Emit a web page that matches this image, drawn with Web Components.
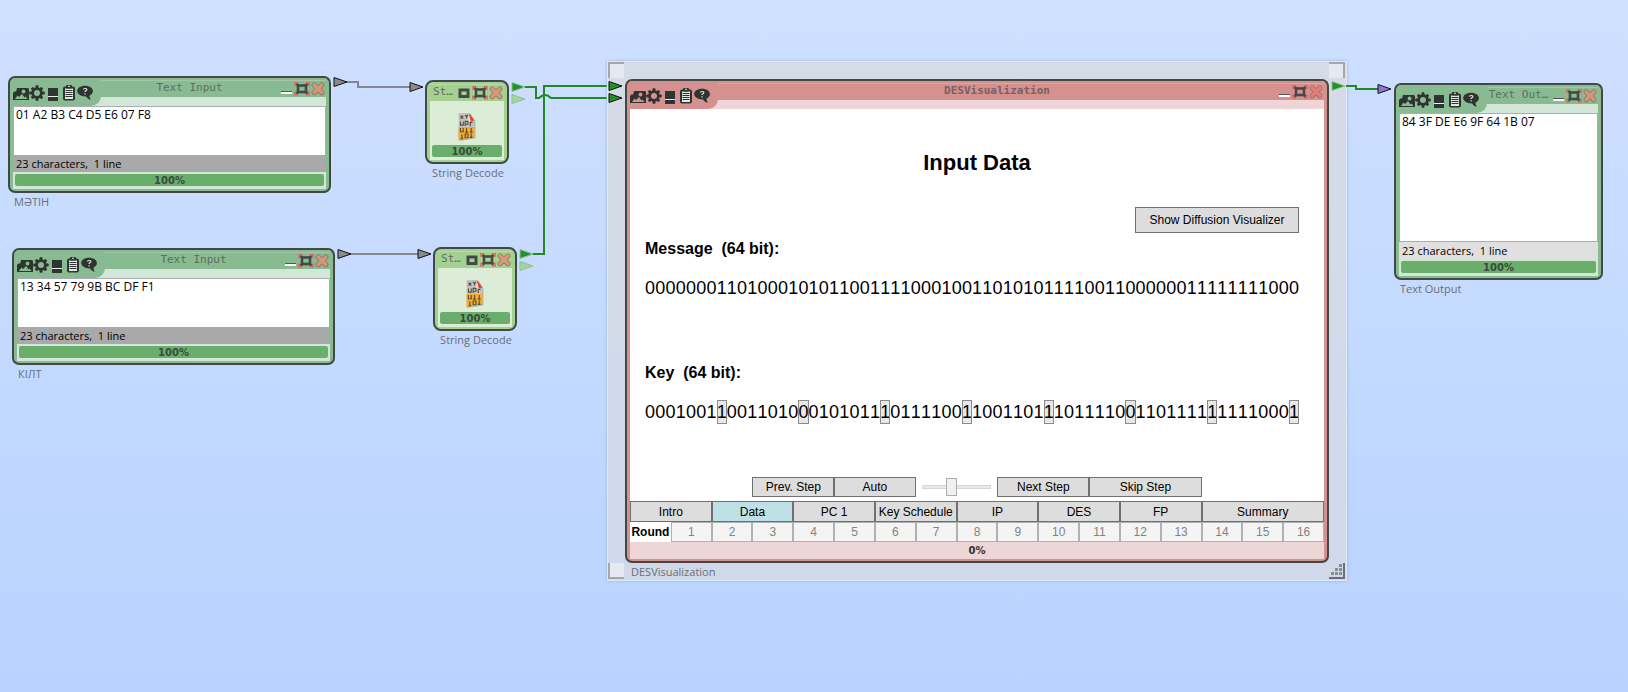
<!DOCTYPE html>
<html lang="en">
<head>
<meta charset="utf-8">
<title>Workspace</title>
<style>
  html, body { margin: 0; min-height: 100%; }
  body { font-family: "Open Sans", "Noto Sans", sans-serif; font-size: 12px; }
</style>
</head>
<body>
<flow-workspace>
  <flow-wires></flow-wires>
  <flow-node style="left:8px;top:76px;width:323px;height:117px" heading="Text Input" caption="МӘТІН" progress="100">
    <text-panel value="01 A2 B3 C4 D5 E6 07 F8" label="Message text" status="23 characters,&nbsp; 1 line"></text-panel>
  </flow-node>
  <flow-node style="left:12px;top:248px;width:323px;height:117px" heading="Text Input" caption="КІЛТ" progress="100">
    <text-panel value="13 34 57 79 9B BC DF F1" label="Key text" status="23 characters,&nbsp; 1 line"></text-panel>
  </flow-node>
  <flow-tile style="left:425px;top:80px;width:84px;height:84px" heading="St…" caption="String Decode"></flow-tile>
  <flow-tile style="left:433px;top:247px;width:84px;height:84px" heading="St…" caption="String Decode"></flow-tile>
  <selection-frame style="left:607px;top:61px;width:740px;height:520px">
    <flow-node kind="alert" heading="DESVisualization" caption="DESVisualization" progress="0">
      <des-view></des-view>
    </flow-node>
  </selection-frame>
  <flow-node style="left:1394px;top:83px;width:209px;height:197px" heading="Text Out…" caption="Text Output" progress="100">
    <text-panel light value="84 3F DE E6 9F 64 1B 07" label="Output text" status="23 characters,&nbsp; 1 line"></text-panel>
  </flow-node>
  <flow-ports></flow-ports>
</flow-workspace>

<script>
const ICONS = {
  picture: `<svg viewBox="0 0 16 16"><path fill="#2f3430" d="M4 3h11l1 1v11H0V8l2-2 1 1z"/><circle cx="10.500" cy="6.500" r="1.900" fill="var(--title)"/><path fill="var(--title)" d="M2 14l2.500-3.500L6 12l3-3 2.500 3.500 1-1L14.500 14z"/></svg>`,
  gear: `<svg viewBox="0 0 16 16"><g fill="#2f3430"><circle cx="8" cy="8" r="5.800"/><rect x="6.500" y="0.300" width="3" height="15.400" rx=".7"/><rect x="0.300" y="6.500" width="15.400" height="3" rx=".7"/><g transform="rotate(45 8 8)"><rect x="6.500" y="0.500" width="3" height="15" rx=".7"/><rect x="0.500" y="6.500" width="15" height="3" rx=".7"/></g></g><circle cx="8" cy="8" r="3" fill="var(--title)"/></svg>`,
  panel: `<svg viewBox="0 0 16 16"><rect x="3" y="3" width="10" height="13" fill="#2f3430"/><rect x="3" y="11" width="10" height="1" fill="#e8efe8"/></svg>`,
  clipboard: `<svg viewBox="0 0 16 16"><rect x="2" y="1.500" width="12" height="14" rx="2" fill="#2f3430"/><rect x="4" y="3.500" width="8" height="10.500" fill="#dfe9df"/><rect x="5" y="0" width="6" height="3.500" rx="1" fill="#2f3430"/><rect x="7" y="0.800" width="2" height="1" fill="#dfe9df"/><path stroke="#2f3430" d="M4.500 5.500h7M4.500 7.500h7M4.500 9.500h7M4.500 11.500h7"/></svg>`,
  help: `<svg viewBox="0 0 16 16"><path fill="#2f3430" d="M8 .8c4.600 0 7.900 2.300 7.900 5.300 0 1.900-1.400 3.700-3.400 4.600.1 1.800.6 3 1.600 3.900-2.300-.2-4-1.300-5-3.200C4.200 11.600.2 9.200.2 6.100.2 3.100 3.500.8 8 .8z"/><path d="M6.300 4.500c.1-1.200 3.600-1.500 3.500.2 0 1.200-1.800 1.100-1.800 2.400M8 8.200v1.300" fill="none" stroke="#d9e2d9" stroke-width="1.200"/></svg>`,
  minimize: `<svg viewBox="0 0 16 16"><path fill="#555" d="M3 10h11v1H3z"/><path fill="#fff" d="M3 11h11v2H3z"/></svg>`,
  restore: `<svg viewBox="0 0 16 16"><rect x="4" y="5" width="8" height="6.500" fill="none" stroke="#454a45" stroke-width="3"/></svg>`,
  full: `<svg viewBox="0 0 16 16"><path fill="none" stroke="#e8625f" stroke-width="1.600" d="M1 5V1.800h3M12 1.800h3V5M15 10.500v3.200h-3M4 13.700H1v-3.200"/><path d="M2.500 3l11 9.500M13.500 3l-11 9.500" stroke="#454a45" stroke-width="2.600"/><rect x="4" y="4.500" width="8" height="6.500" fill="var(--title)" stroke="#454a45" stroke-width="2.600"/></svg>`,
  close: `<svg viewBox="0 0 16 16"><path stroke="#8d7666" stroke-width="5.200" stroke-linecap="round" d="M4.200 4l7.600 7.600M11.800 4l-7.600 7.600"/><path stroke="var(--close)" stroke-width="3.600" stroke-linecap="round" d="M4.200 4l7.600 7.600M11.800 4l-7.600 7.600"/></svg>`,
  decode: `<svg viewBox="0 0 20 32"><path d="M2 3l12-1 5 8v18L2 31z" fill="#77777777"/><path d="M1 1l11 0 6 8v17L1 30z" fill="#c2c2c2"/><path d="M1 16h17v10L1 30z" fill="#f7ab2c"/><path d="M12 1l6 8-5 1z" fill="#e5432a"/><path d="M12 3l-1 7h3z" fill="#ece9e2"/><g fill="none" stroke="#55503f" stroke-width="1.200"><path d="M3 4l3 3M6 4l-3 3M8 3l1.500 2L11 3M9.500 5v2M3 10v4h3v-4M8 15v-5h3v3H8M13.500 15v-4h2.500M4.500 14v0M3 17v4h3v-4M9.500 17v4M8 21.500h3M14.500 17v4M13 21.500h3M4.500 24v4M3 28.500h3M8 23.500v4h3v-4zM14.500 23v4M13 27h3"/></g></svg>`
};

function define(name, build) {
  customElements.define(name, class extends HTMLElement {
    connectedCallback() {
      if (this.shadowRoot) return;
      const root = this.attachShadow({ mode: 'open' });
      const t = document.createElement('template');
      t.innerHTML = build(this);
      root.append(t.content.cloneNode(true));
    }
  });
}
const iconButton = (icon, label) => `<button class="icon" aria-label="${label}">${ICONS[icon]}</button>`;
const iconCss = `.icon{border:0;padding:0;margin:0;background:none;width:16px;height:16px;flex:none;display:block}
  .icon svg{display:block;width:16px;height:16px}`;
const titleCss = `.title{flex:1;min-width:0;text-align:center;font:11px/20px "DejaVu Sans Mono",monospace;color:#5d6e60;white-space:nowrap;overflow:hidden}`;
const fillCss = `.fill{box-sizing:border-box;height:12px;padding-top:1px;background:#69af6b;border-radius:2px;text-align:center;font:bold 10px/12px "DejaVu Sans",sans-serif;color:#3c4a3e}`;

define('flow-workspace', () => `
  <style>
    :host{display:block;position:relative;min-height:100vh;overflow:hidden;background:linear-gradient(#cfe0ff,#b8d3ff)}
    ::slotted(*){position:absolute}
  </style><slot></slot>`);

define('flow-node', el => `
  <style>
    :host{display:block;position:relative;--title:#89bb92;--pale:#d2e7d8;--close:#d59578}
    :host([kind=alert]){--title:#d59090;--pale:#eed6d6;--close:#ea7a78}
    .frame{box-sizing:border-box;height:100%;border:2px solid #424844;border-radius:7px;background:var(--title);padding:0 3px 2px;display:flex;flex-direction:column}
    header{display:grid;grid-template-columns:88px 1fr;height:28px;flex:none;background:linear-gradient(var(--title) 19px,var(--pale) 19px)}
    .tools{display:flex;padding:7px 0 0;background:var(--title);border-bottom-right-radius:10px}
    .bar{display:flex;height:19px;background:linear-gradient(#fff0 2px,#fff3 2px,#fff3 3px,#fff0 3px)}
    .controls{display:flex;padding-top:3px}
    .body{flex:1;min-height:0;display:flex;flex-direction:column}
    .body ::slotted(*){flex:1;min-height:0}
    .progress{flex:none;height:17px;box-sizing:border-box;padding:2px;background:var(--pale)}
    .caption{position:absolute;left:6px;top:100%;font-size:11px;line-height:18px;color:#6b6f75;white-space:nowrap}
    ${iconCss}${titleCss}${fillCss}
    :host([kind=alert]) .fill{background:none;color:#333}
    :host([kind=alert]) .title{font-weight:bold;color:#7a6060}
  </style>
  <section class="frame">
    <header>
      <div class="tools">${iconButton('picture','Presentation')}${iconButton('gear','Settings')}${iconButton('panel','Data')}${iconButton('clipboard','Log')}${iconButton('help','Help')}</div>
      <div class="bar"><span class="title">${el.getAttribute('heading')}</span>
      <div class="controls">${iconButton('minimize','Minimize')}${iconButton('full','Full screen')}${iconButton('close','Close')}</div></div>
    </header>
    <div class="body"><slot></slot></div>
    <div class="progress"><div class="fill">${el.getAttribute('progress')}%</div></div>
  </section>
  <div class="caption">${el.getAttribute('caption')}</div>`);

define('text-panel', el => `
  <style>
    :host{display:flex;flex-direction:column}
    textarea{flex:1;min-height:0;box-sizing:border-box;width:100%;border:1px solid #abadb3;border-bottom:0;padding:0 2px;margin:0;resize:none;font:inherit;font-size:12px;line-height:15px;background:#fff;color:#000;outline:0;display:block;overflow:hidden}
    .status{height:17px;font-size:11px;line-height:18px;padding-left:3px;background:#a9a9a9;color:#000}
    :host([light]) .status{background:#e0e0e0;border-top:1px solid #abadb3}
  </style>
  <textarea aria-label="${el.getAttribute('label')}">${el.getAttribute('value')}</textarea>
  <div class="status">${el.getAttribute('status')}</div>`);

define('flow-tile', el => `
  <style>
    :host{display:block;--title:#a4d192;--close:#d9987c}
    .frame{box-sizing:border-box;height:100%;border:2px solid #424844;border-radius:8px;background:var(--title);padding:0 3px 2px;display:flex;flex-direction:column}
    header{display:flex;height:19px;flex:none;background:linear-gradient(#fff0 2px,#fff3 2px,#fff3 3px,#fff0 3px)}
    .controls{display:flex;padding-top:3px}
    .body{flex:1;box-sizing:border-box;background:#dbedd6;padding:11px 2px 3px;display:flex;flex-direction:column;align-items:center;justify-content:space-between}
    .pic svg{display:block;width:20px;height:30px}
    .caption{position:absolute;left:-10px;right:-12px;top:100%;font-size:11px;line-height:18px;text-align:center;color:#6b6f75;white-space:nowrap}
    ${iconCss}${titleCss}${fillCss}
    .fill{width:100%}
  </style>
  <section class="frame">
    <header><span class="title">${el.getAttribute('heading')}</span><div class="controls">${iconButton('restore','Restore')}${iconButton('full','Full screen')}${iconButton('close','Close')}</div></header>
    <div class="body"><div class="pic">${ICONS.decode}</div><div class="fill">100%</div></div>
  </section>
  <div class="caption">${el.getAttribute('caption')}</div>`);

define('selection-frame', () => `
  <style>
    :host{display:block;box-sizing:border-box;padding:17px;background:linear-gradient(#d5dce7,#cfd9e9);border:1px solid #dfe8f6;box-shadow:0 0 3px #9db4d8}
    ::slotted(*){height:484px;display:block}
    i{position:absolute;width:16px;height:16px;box-sizing:border-box;background:#e5eaf2;border:0 solid #a5a7aa}
    .tl{left:0;top:0;border-width:2px 0 0 2px}.tr{right:1px;top:0;border-width:2px 2px 0 0}
    .bl{left:0;bottom:1px;border-width:0 0 2px 2px}
    .br{right:1px;bottom:1px;border-width:0 2px 2px 0;border-color:#6d7076;background:none}
    .br svg{display:block}
  </style>
  <slot></slot><i class="tl"></i><i class="tr"></i><i class="bl"></i>
  <i class="br"><svg width="14" height="14" fill="#8b8d92"><path d="M10 1h3v3h-3zM6 5h3v3H6zM10 5h3v3h-3zM2 9h3v3H2zM6 9h3v3H6zM10 9h3v3h-3z"/></svg></i>`);

define('bit-row', el => {
  const every = Number(el.getAttribute('mark-every')) || 0;
  const cells = [...el.getAttribute('bits')].map((b, i) =>
    every && (i + 1) % every === 0 ? `<b>${b}</b>` : `<span>${b}</span>`).join('');
  return `<style>
    :host{display:grid;grid-template-columns:repeat(64,1fr);height:24px;font:18px/24px "Liberation Sans",Arial,sans-serif;color:#000;text-align:center}
    b{font-weight:normal;background:#e8e8e8;outline:1px solid #8a8a8a;outline-offset:-1px}
  </style>${cells}`;
});

define('des-view', () => {
  const tabs = ['Intro','Data','PC 1','Key Schedule','IP','DES','FP','Summary'];
  return `<style>
    :host{display:flex;flex-direction:column;background:#fff;color:#000;font:12px "Liberation Sans",Arial,sans-serif}
    .main{flex:1;min-height:0;padding:42px 25px 0 15px;display:flex;flex-direction:column}
    .main>*{flex:none}
    h2{margin:0 -10px 32px 0;text-align:center;font-size:22px;line-height:24px}
    h3{margin:0;font-size:16px;line-height:20px}
    button{font:inherit;color:#000;background:#ddd;border:1px solid #707070;border-radius:0;padding:0;margin:0;min-width:0;white-space:nowrap}
    .show{align-self:flex-end;width:164px;height:26px;margin-bottom:6px}
    bit-row{margin:17px 0 63px}
    bit-row:last-child{margin-bottom:0}
    .grid{display:grid;grid-template-columns:repeat(68,1fr);flex:none}
    .steps{height:20px;margin-bottom:4px}
    .tabs{height:21px}.rounds{height:20px}
    .tabs button{grid-column:span 8}.tabs button:last-child{grid-column:span 12}
    .tabs button.on{background:#bee0e6}
    .rounds button{grid-column:span 4;background:#f4f4f4;border-color:#adb2b5;color:#838383}
    .rounds strong{grid-column:span 4;line-height:20px;text-align:center}
    input{-webkit-appearance:none;appearance:none;margin:0 6px;min-width:0;background:none;height:20px}
    input::-webkit-slider-runnable-track{height:4px;box-sizing:border-box;background:#e7eaea;border:1px solid #d6d6d6}
    input::-webkit-slider-thumb{-webkit-appearance:none;width:11px;height:18px;box-sizing:border-box;margin-top:-8px;background:#f0f0f0;border:1px solid #acacac;border-radius:0}
  </style>
  <div class="main">
    <h2>Input Data</h2>
    <button class="show">Show Diffusion Visualizer</button>
    <h3>Message&nbsp; (64 bit):</h3>
    <bit-row bits="0000000110100010101100111100010011010101111001100000011111111000"></bit-row>
    <h3>Key&nbsp; (64 bit):</h3>
    <bit-row mark-every="8" bits="0001001100110100010101110111100110011011101111001101111111110001"></bit-row>
  </div>
  <div class="grid steps">
    <button style="grid-column:13/21">Prev. Step</button><button style="grid-column:21/29">Auto</button>
    <input type="range" aria-label="Speed" min="0" max="100" value="41" style="grid-column:29/37">
    <button style="grid-column:37/46">Next Step</button><button style="grid-column:46/57">Skip Step</button>
  </div>
  <div class="grid tabs">${tabs.map(t => `<button${t === 'Data' ? ' class="on"' : ''}>${t}</button>`).join('')}</div>
  <div class="grid rounds"><strong>Round</strong>${Array.from({ length: 16 }, (_, i) => `<button disabled>${i + 1}</button>`).join('')}</div>`;
});

define('flow-wires', () => `
  <style>:host{display:block;left:0;top:0}svg{display:block}</style>
  <svg width="1628" height="400" fill="none" stroke-width="2" aria-hidden="true">
    <g stroke="#85878d"><path d="M347 82h11v5h52M351 254h67"/></g>
    <g stroke="#1f8a24"><path d="M525 87h11v11h3q6-6 12 0h58M533 254h11V86h65M1346 86h10v3h22"/></g>
  </svg>`);

define('flow-ports', () => {
  const port = (x, y, fill, stroke) => `<path d="M${x} ${y - 4.5}l13 4.500-13 4.500z" fill="${fill}" stroke="${stroke}"/>`;
  return `<style>:host{display:block;left:0;top:0;pointer-events:none}svg{display:block}</style>
  <svg width="1628" height="400" aria-hidden="true">
    ${port(334,82,'#8a8a8a','#111')}${port(338,254,'#8a8a8a','#111')}
    ${port(410,87,'#8a8a8a','#111')}${port(418,254,'#8a8a8a','#111')}
    ${port(609,86,'#22912a','#111')}${port(609,98,'#22912a','#111')}
    ${port(512,87,'#22912a','#8fbf95')}${port(520,254,'#22912a','#8fbf95')}
    ${port(512,99,'#a5d49a','#8fbf95')}${port(520,266,'#a5d49a','#8fbf95')}
    ${port(1332,86,'#22912a','#8fbf95')}${port(1378,89,'#9370db','#111')}
    <path d="M1346 86h3" stroke="#1f8a24" stroke-width="2"/>
  </svg>`;
});
</script>
</body>
</html>
